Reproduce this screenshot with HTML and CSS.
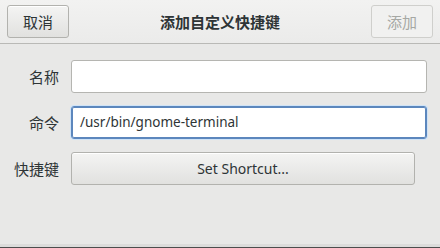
FILE: index.html
```html
<!DOCTYPE html>
<html>
<head>
<meta charset="utf-8">
<link rel="stylesheet" href="styles.css">
</head>
<body>
<div class="dialog">
  <div class="header">
    <button class="btn hbtn">取消</button>
    <div class="title">添加自定义快捷键</div>
    <button class="btn hbtn disabled">添加</button>
  </div>
  <div class="form">
    <div class="label">名称</div>
    <div class="entry"></div>
    <div class="label">命令</div>
    <div class="entry focus">/usr/bin/gnome-terminal</div>
    <div class="label">快捷键</div>
    <button class="btn shortcut">Set Shortcut...</button>
  </div>
</div>
</body>
</html>
```

FILE: styles.css
```css
html, body {
  margin: 0;
  padding: 0;
}
body {
  width: 440px;
  height: 248px;
  overflow: hidden;
  background: #e8e8e7;
  font-family: "Noto Sans", "Noto Sans CJK SC", sans-serif;
  color: #2e3436;
}
.dialog {
  height: 248px;
  box-sizing: border-box;
  border-bottom: 1px solid #4d4d4d;
  box-shadow: inset 0 -3px 0 #dcdcdb;
  display: flex;
  flex-direction: column;
}
.header {
  height: 43px;
  border-bottom: 1px solid #b9b9b6;
  background: linear-gradient(#f2f2f1, #ebebea);
  display: flex;
  align-items: center;
  justify-content: space-between;
  padding: 0 7px;
}
.btn {
  font-family: "Noto Sans", "Noto Sans CJK SC", sans-serif;
  font-size: 15px;
  color: #2e3436;
  border: 1px solid #b2b2ae;
  border-radius: 3px;
  background: linear-gradient(#f4f4f3, #e1e1df);
  box-shadow: inset 0 1px 0 #ffffff;
  padding: 0;
  margin: 0;
}
.hbtn {
  width: 62px;
  height: 33px;
}
.disabled {
  background: #f1f1f0;
  border-color: #cfcfcc;
  color: #a6a8a4;
  box-shadow: none;
}
.title {
  font-size: 15px;
  font-weight: bold;
  color: #2e3436;
}
.form {
  display: grid;
  grid-template-columns: 59px 1fr;
  column-gap: 12px;
  row-gap: 13px;
  padding: 16px 13px 0 0;
  grid-auto-rows: 33px;
}
.label {
  font-size: 15px;
  text-align: right;
  align-self: center;
  color: #2e3436;
}
.entry {
  box-sizing: border-box;
  height: 33px;
  background: #ffffff;
  border: 1px solid #b5b5b1;
  border-radius: 3px;
  font-size: 13.5px;
  line-height: 31px;
  padding-left: 8px;
  color: #2e3436;
}
.focus {
  border-color: #5c87bd;
  box-shadow: inset 0 0 0 1px #5c87bd, 0 0 0 1px #cfe3f7;
}
.shortcut {
  box-sizing: border-box;
  height: 33px;
  margin-right: 12px;
  font-size: 14px;
}
```
